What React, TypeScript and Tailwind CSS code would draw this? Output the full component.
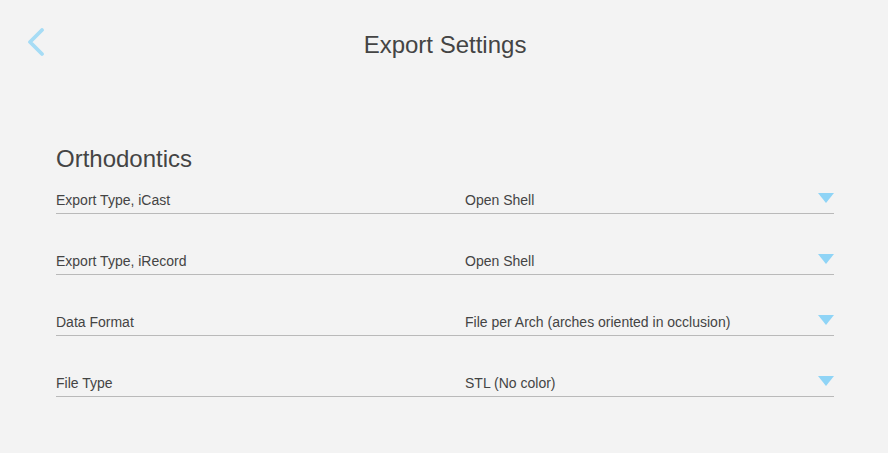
import React from "react";

const rows = [
  { label: "Export Type, iCast", value: "Open Shell" },
  { label: "Export Type, iRecord", value: "Open Shell" },
  { label: "Data Format", value: "File per Arch (arches oriented in occlusion)" },
  { label: "File Type", value: "STL (No color)" },
];

export default function App() {
  return (
    <div
      className="w-[888px] h-[453px] bg-[#f3f3f3] text-[#444444] overflow-hidden"
      style={{ fontFamily: "'Liberation Sans', Arial, sans-serif" }}
    >
      <div className="relative h-[90px] flex items-center justify-center">
        <button className="absolute left-[26px] top-[28px] w-[20px] h-[30px]">
          <svg width="20" height="30" viewBox="0 0 20 30" fill="none">
            <path d="M16 2 L4 14 L16 26" stroke="#a6dcf5" strokeWidth="3.8" strokeLinecap="round" strokeLinejoin="round" />
          </svg>
        </button>
        <h1 className="text-[24px] leading-none ml-[2px]">Export Settings</h1>
      </div>
      <div className="pl-[56px] w-[834px] pt-[57px]">
        <h2 className="text-[24px] leading-none">Orthodontics</h2>
        <div className="flex flex-col">
          {rows.map((r, i) => (
            <div
              key={i}
              className={i === 0 ? "flex items-end border-b border-[#b9b9b9] pb-[5px] h-[43px]" : "flex items-end border-b border-[#b9b9b9] pb-[5px] h-[61px]"}
            >
              <div className="w-[409px] text-[14px] leading-[16px]">{r.label}</div>
              <div className="flex-1 text-[14px] leading-[16px]">{r.value}</div>
              <svg width="16" height="11" viewBox="0 0 16 11" className="mb-[4px]">
                <polygon points="0,0 16,0 8,10" fill="#8fd4f6" />
              </svg>
            </div>
          ))}
        </div>
      </div>
    </div>
  );
}
